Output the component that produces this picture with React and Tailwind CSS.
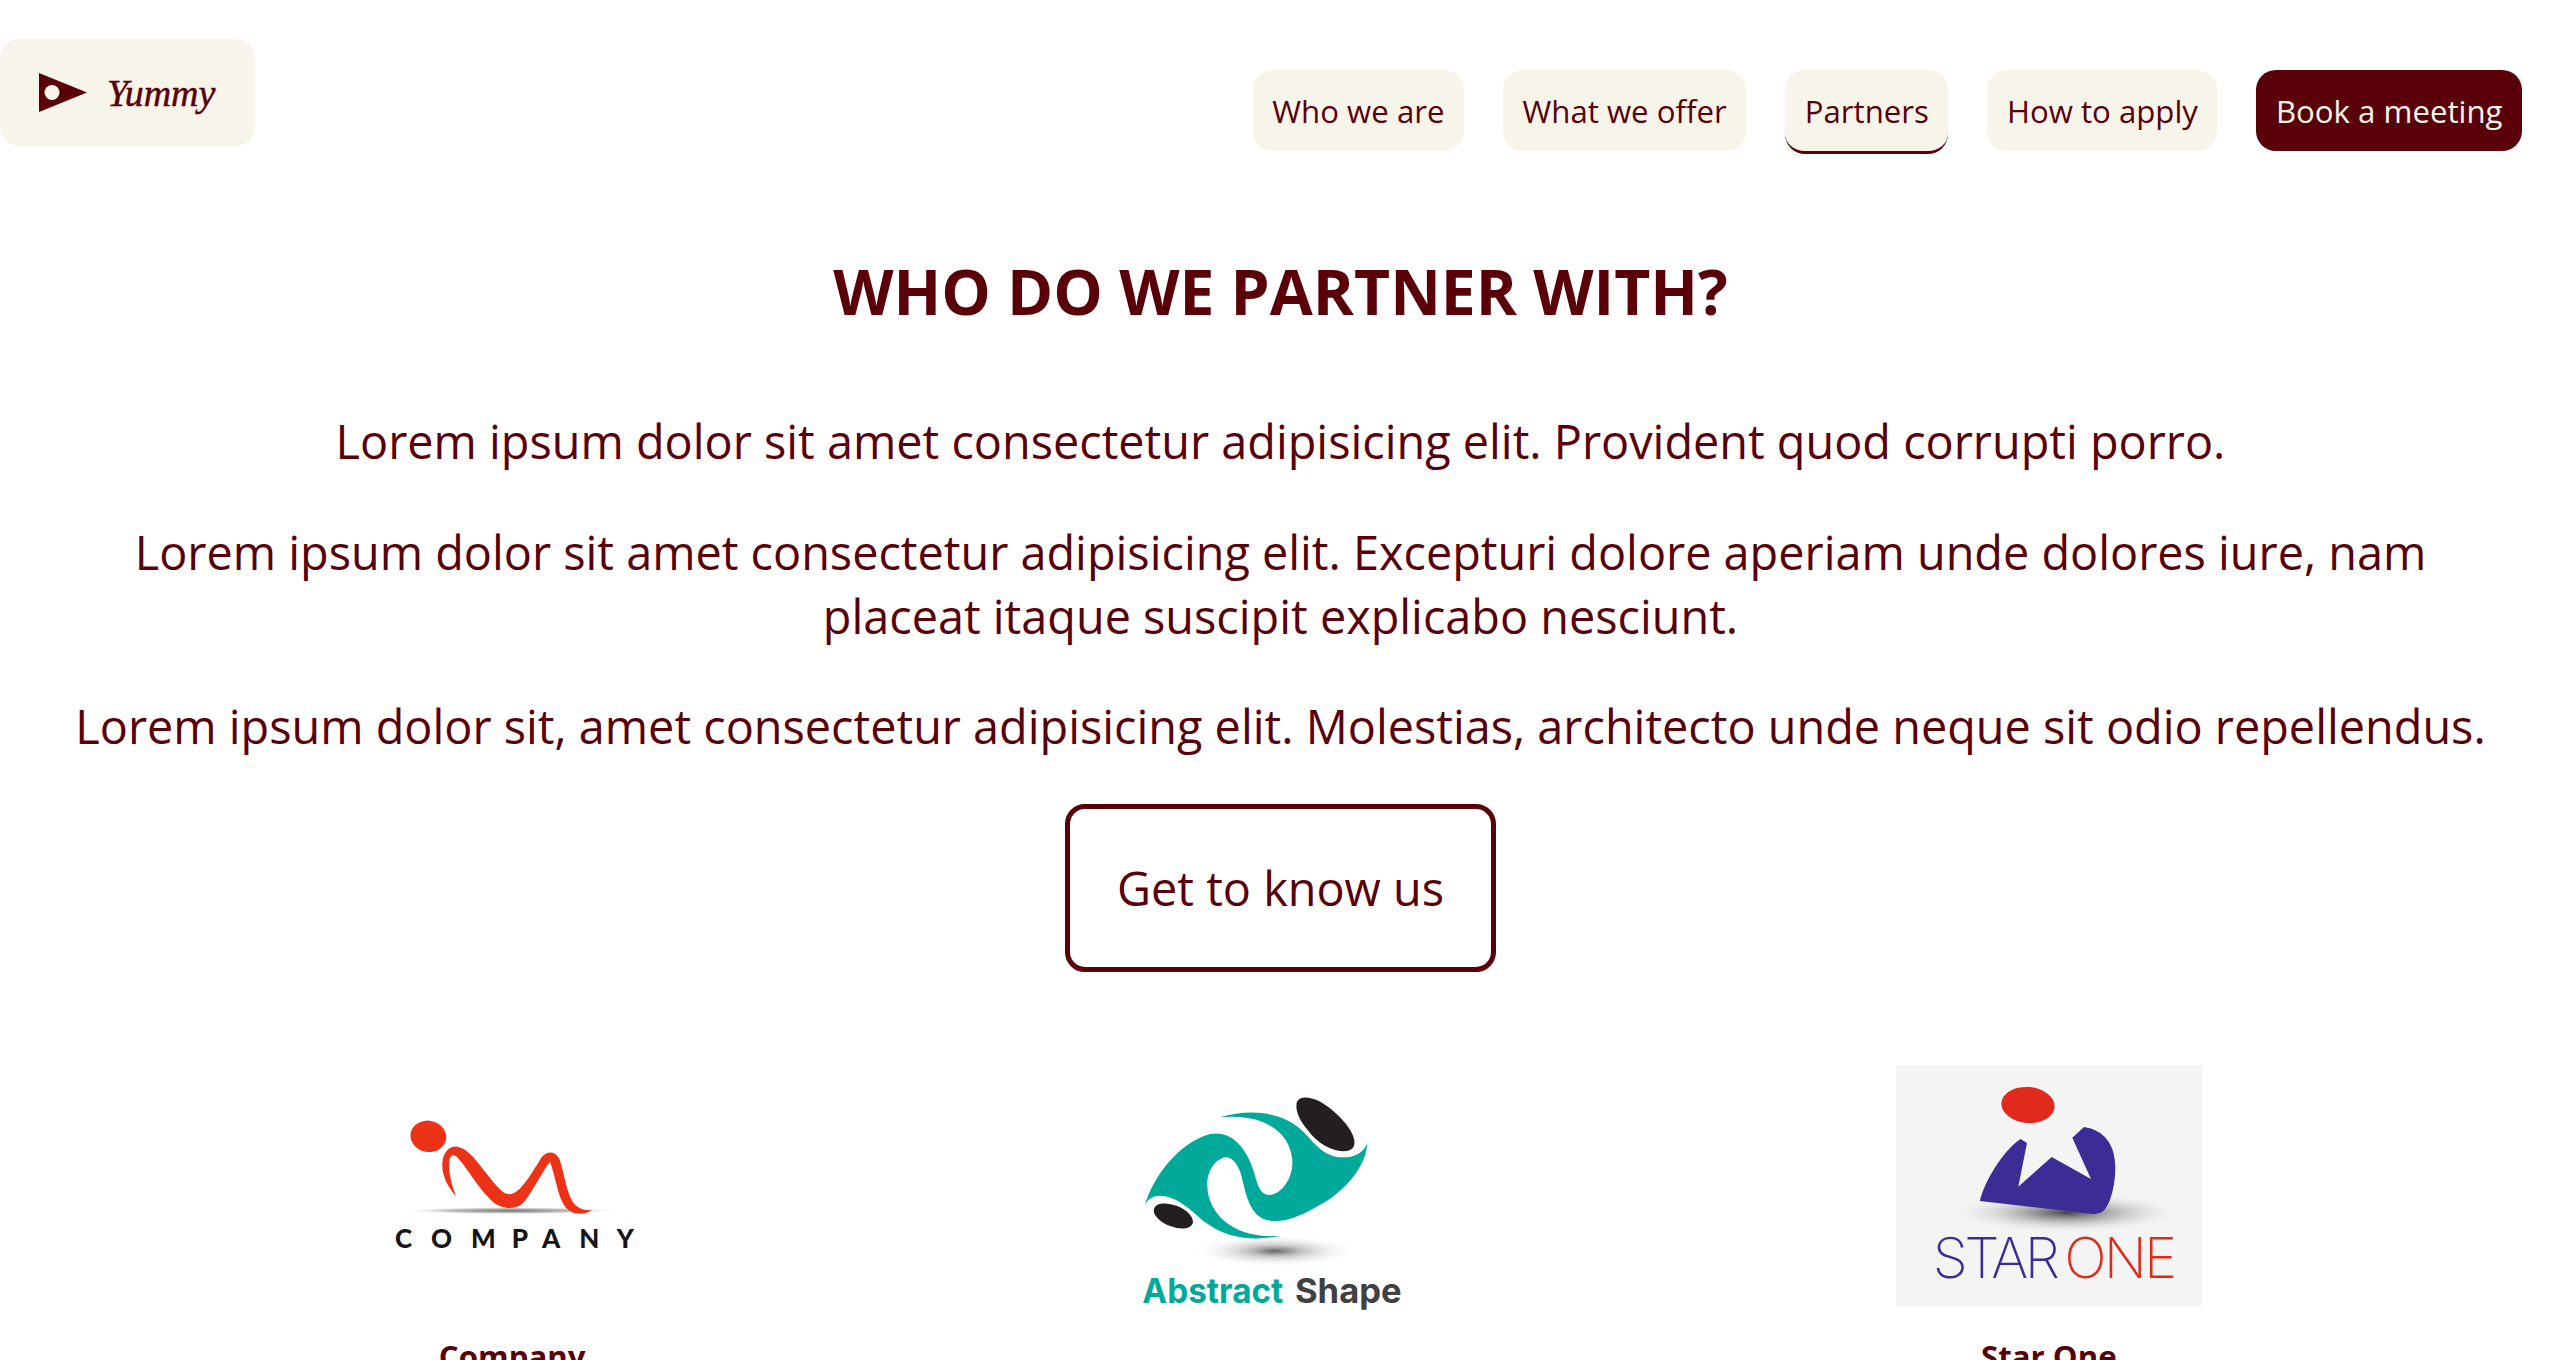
const navItems = ["Who we are", "What we offer", "Partners", "How to apply"];

function CompanyLogo() {
  return (
    <svg width="306" height="241" viewBox="0 0 306 241">
      <defs>
        <radialGradient id="companyShadow">
          <stop offset="0" stopColor="#777" />
          <stop offset="0.55" stopColor="#aaa" stopOpacity="0.8" />
          <stop offset="1" stopColor="#fff" stopOpacity="0" />
        </radialGradient>
      </defs>
      <g transform="translate(1 15) scale(0.3333)">
        <ellipse cx="450" cy="392" rx="330" ry="11" fill="url(#companyShadow)" />
        <ellipse cx="205" cy="169" rx="54" ry="47" transform="rotate(10 205 169)" fill="#ec3317" />
        <path
          d="M288 348C262 320 245 285 247 250C249 215 270 197 292 200C320 204 345 235 375 275C400 305 425 342 448 343C480 343 515 280 545 232C560 212 585 212 597 235C610 265 615 320 635 360C650 388 675 392 695 390C680 402 650 408 625 390C595 365 590 300 570 245C550 270 515 340 490 368C465 392 425 388 395 362C355 325 325 270 297 238C285 222 270 220 268 245C265 275 275 315 288 348Z"
          fill="#ec3317"
        />
        <text
          x="105 213 333 455 546 658 770"
          y="503"
          fontFamily="Lato, sans-serif"
          fontWeight="900"
          fontSize="78"
          fill="#161616"
        >
          COMPANY
        </text>
      </g>
    </svg>
  );
}

function AbstractLogo() {
  return (
    <svg width="306" height="295" viewBox="0 0 306 295">
      <defs>
        <radialGradient id="abstractShadow">
          <stop offset="0" stopColor="#666" />
          <stop offset="0.35" stopColor="#bbb" stopOpacity="0.8" />
          <stop offset="1" stopColor="#fff" stopOpacity="0" />
        </radialGradient>
      </defs>
      <g transform="translate(-17 5) scale(0.3333)">
        <ellipse cx="495" cy="543" rx="250" ry="48" fill="url(#abstractShadow)" />
        <path
          d="M105 405C125 330 200 220 300 192C370 180 410 240 430 300C445 350 450 375 480 375C520 370 550 320 547 270C540 190 470 130 330 142C420 115 520 125 580 185C610 215 640 262 700 262C735 262 765 245 772 218C770 290 700 370 620 410C560 445 510 460 470 450C420 435 410 380 395 320C385 280 365 260 345 262C310 270 290 310 292 350C295 430 370 510 515 497C430 515 350 505 290 460C250 430 210 380 150 377C125 377 112 390 105 405Z"
          fill="#00a99a"
        />
        <path
          d="M560 100C565 75 610 75 660 115C710 155 745 205 730 232C715 255 650 245 605 195C575 160 555 130 560 100Z"
          fill="#231f20"
        />
        <ellipse cx="190" cy="438" rx="62" ry="32" transform="rotate(22 190 438)" fill="#231f20" />
        <text
          x="97"
          y="700"
          textLength="423"
          lengthAdjust="spacingAndGlyphs"
          fontFamily="Inter, sans-serif"
          fontWeight="700"
          fontSize="103"
          fill="#00a99a"
        >
          Abstract
        </text>
        <text
          x="555"
          y="700"
          textLength="320"
          lengthAdjust="spacingAndGlyphs"
          fontFamily="Inter, sans-serif"
          fontWeight="700"
          fontSize="103"
          fill="#414042"
        >
          Shape
        </text>
      </g>
    </svg>
  );
}

function StarOneLogo() {
  return (
    <svg width="306" height="241" viewBox="0 0 306 241" className="bg-[#f4f4f4]">
      <defs>
        <radialGradient id="starShadow">
          <stop offset="0" stopColor="#444" />
          <stop offset="0.3" stopColor="#888" stopOpacity="0.8" />
          <stop offset="1" stopColor="#f4f4f4" stopOpacity="0" />
        </radialGradient>
      </defs>
      <g transform="translate(-16 -15) scale(0.3333)">
        <ellipse cx="560" cy="488" rx="350" ry="62" fill="url(#starShadow)" />
        <ellipse cx="444" cy="165" rx="80" ry="54" transform="rotate(5 444 165)" fill="#e02b1c" />
        <path
          d="M300 453C310 400 370 300 422 267L441 279L415 410L515 321L633 387L577 263L612 231C670 240 705 280 706 350C706 400 695 450 675 478C665 490 650 494 630 491Z"
          fill="#3b2c96"
        />
        <text
          x="158"
          y="683"
          textLength="382"
          lengthAdjust="spacing"
          fontFamily="Inter, sans-serif"
          fontWeight="200"
          fontSize="169"
          fill="#3b2c96"
        >
          STAR
        </text>
        <text
          x="553"
          y="683"
          textLength="339"
          lengthAdjust="spacing"
          fontFamily="Inter, sans-serif"
          fontWeight="200"
          fontSize="169"
          fill="#e02b1c"
        >
          ONE
        </text>
      </g>
    </svg>
  );
}

const partners = [
  { id: "company", name: "Company", logo: <CompanyLogo /> },
  { id: "abstract", logo: <AbstractLogo /> },
  { id: "star", name: "Star One", logo: <StarOneLogo /> },
];

export default function App() {
  return (
    <div className="h-[1360px] overflow-hidden bg-white font-['Open_Sans',sans-serif] text-[#590009]">
      <header className="flex items-start justify-between pt-[39px] pr-[39px]">
        <a className="flex h-[107px] w-[255px] items-center gap-[20px] rounded-[20px] bg-[#f7f5e9] pl-[39px]">
          <svg width="48" height="39" viewBox="0 0 48 39">
            <path d="M0 0L48 19.5L0 39Z" fill="#590009" />
            <circle cx="13" cy="19.5" r="7.5" fill="#f7f5e9" />
          </svg>
          <span className="font-['Liberation_Serif',serif] text-[38px] italic leading-none [-webkit-text-stroke:0.5px_#590009]">
            Yummy
          </span>
        </a>
        <nav className="mt-[31px] flex items-start gap-[39px] text-[31.2px] leading-[42px]">
          {navItems.map((item) => (
            <a
              key={item}
              className={`rounded-[20px] bg-[#f7f5e9] p-[19.5px] ${
                item === "Partners" ? "border-b-[3px] border-[#590009]" : ""
              }`}
            >
              {item}
            </a>
          ))}
          <a className="rounded-[20px] bg-[#590009] p-[19.5px] text-[#f7f5e9]">Book a meeting</a>
        </nav>
      </header>

      <main className="flex flex-col items-center px-[64px] text-center">
        <h1 className="mt-[94px] text-[62.4px] font-bold leading-[85px]">WHO DO WE PARTNER WITH?</h1>
        <p className="mt-[76px] text-[46.8px] leading-[64px]">
          Lorem ipsum dolor sit amet consectetur adipisicing elit. Provident quod corrupti porro.
        </p>
        <p className="mt-[47px] text-[46.8px] leading-[64px]">
          Lorem ipsum dolor sit amet consectetur adipisicing elit. Excepturi dolore aperiam unde dolores iure, nam
          placeat itaque suscipit explicabo nesciunt.
        </p>
        <p className="mt-[46px] text-[46.8px] leading-[64px]">
          Lorem ipsum dolor sit, amet consectetur adipisicing elit. Molestias, architecto unde neque sit odio
          repellendus.
        </p>
        <a className="mt-[46px] rounded-[20px] border-[5px] border-[#590009] p-[47px] text-[46.8px] leading-[64px]">
          Get to know us
        </a>
      </main>

      <section className="mt-[93px] grid grid-cols-3 px-[128px]">
        {partners.map((p) => (
          <div key={p.id} className="flex flex-col items-center">
            {p.logo}
            {p.name && <h3 className="mt-[29px] text-[31.2px] font-bold leading-[42px]">{p.name}</h3>}
          </div>
        ))}
      </section>
    </div>
  );
}
